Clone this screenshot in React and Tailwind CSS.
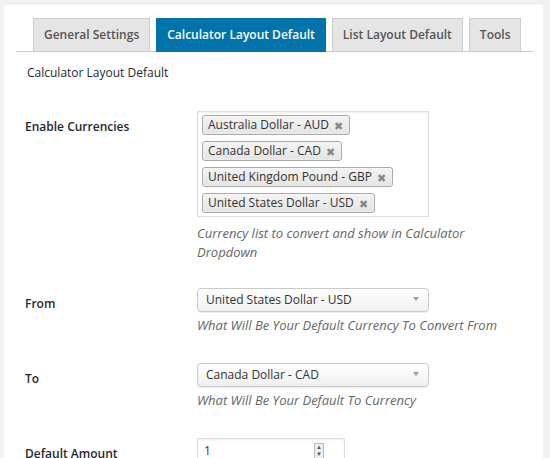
import React from "react";

const currencies = [
  "Australia Dollar - AUD",
  "Canada Dollar - CAD",
  "United Kingdom Pound - GBP",
  "United States Dollar - USD",
];

const tabs = [
  { label: "General Settings", active: false },
  { label: "Calculator Layout Default", active: true },
  { label: "List Layout Default", active: false },
  { label: "Tools", active: false },
];

function SelectBox({ value }) {
  return (
    <div className="flex h-[24px] w-[232px] items-center justify-between rounded-[4px] border border-[#c9c9c9] bg-gradient-to-b from-white to-[#f0f0f0] pl-[8px] pr-[9px] text-[12px] text-[#333] shadow-[0_1px_1px_rgba(0,0,0,0.08)]">
      <span>{value}</span>
      <svg width="6" height="4" viewBox="0 0 6 4" className="mb-[2px]">
        <path d="M0 0h6L3 4z" fill="#999" />
      </svg>
    </div>
  );
}

function Row({ label, children, className }) {
  return (
    <div className={"flex " + className}>
      <div className="w-[193px] shrink-0 pl-[21px] pt-[7px] text-[12px] font-semibold leading-[18px] text-[#23282d]">{label}</div>
      <div className="flex flex-col">{children}</div>
    </div>
  );
}

export default function App() {
  return (
    <div className="min-h-screen bg-[#f1f1f1] pl-[4px] pr-[7px] pt-[5px]" style={{ fontFamily: "'Open Sans', 'Noto Sans', sans-serif" }}>
      <div className="h-[453px] overflow-hidden bg-white pl-[12px] pr-[10px] pt-[13px]">
        {/* tabs */}
        <div className="flex gap-[6px] border-b border-[#ccc] pl-[17px]">
          {tabs.map((t) => (
            <div
              key={t.label}
              className={
                t.active
                  ? "-mb-px flex h-[34px] items-center whitespace-nowrap border border-[#0073aa] bg-[#0073aa] px-[10px] text-[12px] font-semibold text-white"
                  : "flex h-[33px] items-center whitespace-nowrap border border-b-0 border-[#ccc] bg-[#e5e5e5] px-[10px] text-[12px] font-semibold text-[#555]"
              }
            >
              {t.label}
            </div>
          ))}
        </div>

        <div className="pl-[11px] pt-[12px] text-[12px] leading-[18px] text-[#23282d]">Calculator Layout Default</div>

        <div className="-ml-[12px] pt-[29px]">
          <Row label="Enable Currencies" className="h-[177px]">
            <div className="flex h-[106px] w-[232px] flex-col items-start gap-[6px] border border-[#ddd] pl-[4px] pt-[3px] shadow-[inset_0_1px_2px_rgba(0,0,0,0.07)]">
              {currencies.map((c) => (
                <div key={c} className="flex h-[20px] items-center gap-[5px] rounded-[3px] border border-[#aaa] bg-gradient-to-b from-[#f4f4f4] to-[#e4e4e4] pl-[5px] pr-[6px] text-[12px] leading-none text-[#333] shadow-[0_0_2px_white_inset]">
                  <span>{c}</span>
                  <span className="text-[11px] text-[#888]">✖</span>
                </div>
              ))}
            </div>
            <p className="mt-[7px] w-[300px] text-[13px] italic leading-[19px] text-[#666]">
              Currency list to convert and show in Calculator Dropdown
            </p>
          </Row>

          <Row label="From" className="h-[75px]">
            <SelectBox value="United States Dollar - USD" />
            <p className="mt-[4px] whitespace-nowrap text-[13px] italic leading-[19px] text-[#666]">What Will Be Your Default Currency To Convert From</p>
          </Row>

          <Row label="To" className="h-[75px]">
            <SelectBox value="Canada Dollar - CAD" />
            <p className="mt-[4px] whitespace-nowrap text-[13px] italic leading-[19px] text-[#666]">What Will Be Your Default To Currency</p>
          </Row>

          <Row label="Default Amount" className="h-[40px]">
            <div className="flex h-[26px] w-[148px] items-center justify-between border border-[#ddd] pl-[6px] pr-[20px] text-[12px] text-[#333] shadow-[inset_0_1px_2px_rgba(0,0,0,0.07)]">
              <span>1</span>
              <span className="flex h-[16px] w-[10px] flex-col items-center justify-center border border-[#bbb] bg-[#eee] text-[6px] leading-[7px] text-[#555]">
                <span>▲</span>
                <span>▼</span>
              </span>
            </div>
          </Row>
        </div>
      </div>
    </div>
  );
}
